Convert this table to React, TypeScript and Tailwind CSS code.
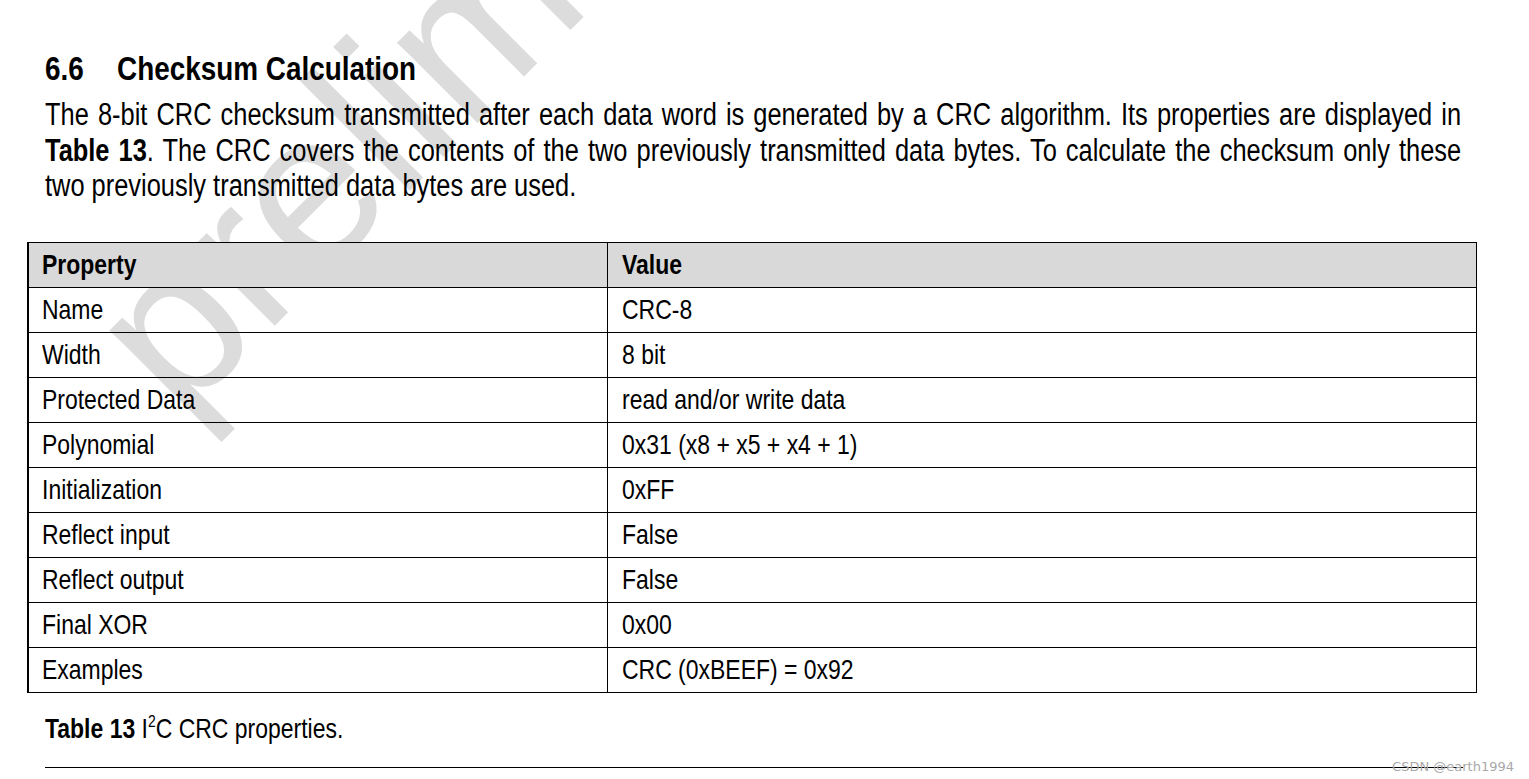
import type { ReactNode } from "react";

const ROWS: [string, string][] = [
  ["Name", "CRC-8"],
  ["Width", "8 bit"],
  ["Protected Data", "read and/or write data"],
  ["Polynomial", "0x31 (x8 + x5 + x4 + 1)"],
  ["Initialization", "0xFF"],
  ["Reflect input", "False"],
  ["Reflect output", "False"],
  ["Final XOR", "0x00"],
  ["Examples", "CRC (0xBEEF) = 0x92"],
];

// no narrow face installed, so squeeze Liberation Sans to Arial Narrow proportions
function Narrow({ children }: { children: ReactNode }) {
  return <span className="inline-block origin-left scale-x-[0.82] whitespace-nowrap">{children}</span>;
}

export default function App() {
  return (
    <div className="relative w-[1529px] h-[779px] overflow-hidden bg-white text-black font-['Liberation_Sans',Arial,sans-serif]">
      {/* draft watermark, sits under the text */}
      <span
        className="absolute left-[51px] top-[292px] origin-top-left -rotate-45 text-[215px] leading-none text-[#dcdcdc] whitespace-nowrap select-none pointer-events-none"
        aria-hidden="true"
      >
        preliminary
      </span>

      <div className="relative z-10 flex flex-col pt-[48px]">
        <h2 className="flex pl-[45px] text-[34px] leading-[40px] font-bold">
          <span className="w-[72px]">
            <Narrow>6.6</Narrow>
          </span>
          <Narrow>Checksum Calculation</Narrow>
        </h2>

        <div className="mt-[9px] ml-[45px] w-[1727px] origin-left scale-x-[0.82] text-[31px] leading-[35.5px]">
          <p className="text-justify [text-align-last:justify]">
            The 8-bit CRC checksum transmitted after each data word is generated by a CRC algorithm. Its properties are displayed in
          </p>
          <p className="text-justify [text-align-last:justify]">
            <b>Table 13</b>. The CRC covers the contents of the two previously transmitted data bytes. To calculate the checksum only these
          </p>
          <p>two previously transmitted data bytes are used.</p>
        </div>

        <table className="mt-[38px] ml-[27px] w-[1450px] border-collapse text-[28px] leading-none">
          <thead>
            <tr className="h-[45px] bg-[#d9d9d9]">
              <th className="w-[579px] border border-black border-l-2 pl-[13px] text-left font-bold">
                <Narrow>Property</Narrow>
              </th>
              <th className="border border-black pl-[14px] text-left font-bold">
                <Narrow>Value</Narrow>
              </th>
            </tr>
          </thead>
          <tbody>
            {ROWS.map(([k, v]) => (
              <tr key={k} className="h-[45px]">
                <td className="border border-black border-l-2 pl-[13px]">
                  <Narrow>{k}</Narrow>
                </td>
                <td className="border border-black pl-[14px]">
                  <Narrow>{v}</Narrow>
                </td>
              </tr>
            ))}
          </tbody>
        </table>

        <p className="mt-[19px] ml-[45px] text-[28px] leading-[34px]">
          <Narrow>
            <b>Table 13</b> I<sup className="text-[17px] leading-none align-[2px]">2</sup>C CRC properties.
          </Narrow>
        </p>

        <div className="mt-[21px] ml-[45px] w-[1418px] border-t border-black" />
      </div>

      <span className="absolute right-[15px] bottom-[6px] z-20 text-[13px] leading-none text-[#a8a8a8] font-['DejaVu_Sans',sans-serif]">
        CSDN @earth1994
      </span>
    </div>
  );
}
